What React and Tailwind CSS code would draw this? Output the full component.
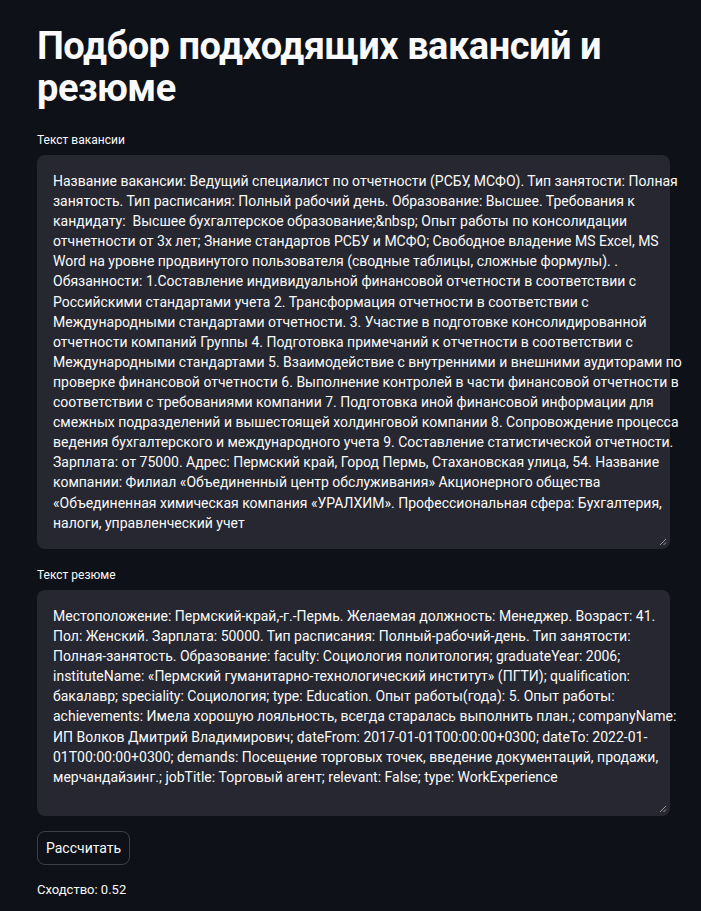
import React from 'react';

const vacancyLines = [
  'Название вакансии: Ведущий специалист по отчетности (РСБУ, МСФО). Тип занятости: Полная',
  'занятость. Тип расписания: Полный рабочий день. Образование: Высшее. Требования к',
  'кандидату:  Высшее бухгалтерское образование;&nbsp; Опыт работы по консолидации',
  'отчнетности от 3х лет; Знание стандартов РСБУ и МСФО; Свободное владение MS Excel, MS',
  'Word на уровне продвинутого пользователя (сводные таблицы, сложные формулы). .',
  'Обязанности: 1.Составление индивидуальной финансовой отчетности в соответствии с',
  'Российскими стандартами учета 2. Трансформация отчетности в соответствии с',
  'Международными стандартами отчетности. 3. Участие в подготовке консолидированной',
  'отчетности компаний Группы 4. Подготовка примечаний к отчетности в соответствии с',
  'Международными стандартами 5. Взаимодействие с внутренними и внешними аудиторами по',
  'проверке финансовой отчетности 6. Выполнение контролей в части финансовой отчетности в',
  'соответствии с требованиями компании 7. Подготовка иной финансовой информации для',
  'смежных подразделений и вышестоящей холдинговой компании 8. Сопровождение процесса',
  'ведения бухгалтерского и международного учета 9. Составление статистической отчетности.',
  'Зарплата: от 75000. Адрес: Пермский край, Город Пермь, Стахановская улица, 54. Название',
  'компании: Филиал «Объединенный центр обслуживания» Акционерного общества',
  '«Объединенная химическая компания «УРАЛХИМ». Профессиональная сфера: Бухгалтерия,',
  'налоги, управленческий учет',
];

const resumeLines = [
  'Местоположение: Пермский-край,-г.-Пермь. Желаемая должность: Менеджер. Возраст: 41.',
  'Пол: Женский. Зарплата: 50000. Тип расписания: Полный-рабочий-день. Тип занятости:',
  'Полная-занятость. Образование: faculty: Социология политология; graduateYear: 2006;',
  'instituteName: «Пермский гуманитарно-технологический институт» (ПГТИ); qualification:',
  'бакалавр; speciality: Социология; type: Education. Опыт работы(года): 5. Опыт работы:',
  'achievements: Имела хорошую лояльность, всегда старалась выполнить план.; companyName:',
  'ИП Волков Дмитрий Владимирович; dateFrom: 2017-01-01T00:00:00+0300; dateTo: 2022-01-',
  '01T00:00:00+0300; demands: Посещение торговых точек, введение документаций, продажи,',
  'мерчандайзинг.; jobTitle: Торговый агент; relevant: False; type: WorkExperience',
];

function ResizeGrip() {
  return (
    <svg className="absolute right-[3px] bottom-[3px]" width="8" height="8" viewBox="0 0 8 8">
      <path d="M7 1 L1 7 M7 4.5 L4.5 7" stroke="#9a9aa3" strokeWidth="1" />
    </svg>
  );
}

function TextBox({ label, lines, height }) {
  return (
    <div className="flex flex-col">
      <label className="text-[12px] leading-[20px] mb-[5px]">{label}</label>
      <div
        className="relative bg-[#262730] rounded-[8px] px-[16px] py-[16px] text-[14px] leading-[20.1px]"
        style={{ height }}
      >
        {lines.map((l, i) => (
          <div key={i} className="whitespace-pre">{l}</div>
        ))}
        <ResizeGrip />
      </div>
    </div>
  );
}

export default function App() {
  return (
    <div
      className="min-h-screen bg-[#0e1117] text-[#fafafa] pl-[37px] pt-[25px]"
      style={{ fontFamily: 'Roboto, "Noto Sans", sans-serif' }}
    >
      <div className="w-[633px] flex flex-col">
        <h1 className="text-[38px] font-bold leading-[42px] tracking-[-0.5px] mb-[21px]">
          Подбор подходящих вакансий и<br />резюме
        </h1>
        <TextBox label="Текст вакансии" lines={vacancyLines} height={394} />
        <div className="h-[16px]" />
        <TextBox label="Текст резюме" lines={resumeLines} height={226} />
        <div className="mt-[15px]">
          <button className="h-[34px] px-[8px] rounded-[8px] border border-[#fafafa]/20 text-[14px]">
            Рассчитать
          </button>
        </div>
        <p className="mt-[15px] text-[13px] leading-[20px]">Сходство: 0.52</p>
      </div>
    </div>
  );
}
